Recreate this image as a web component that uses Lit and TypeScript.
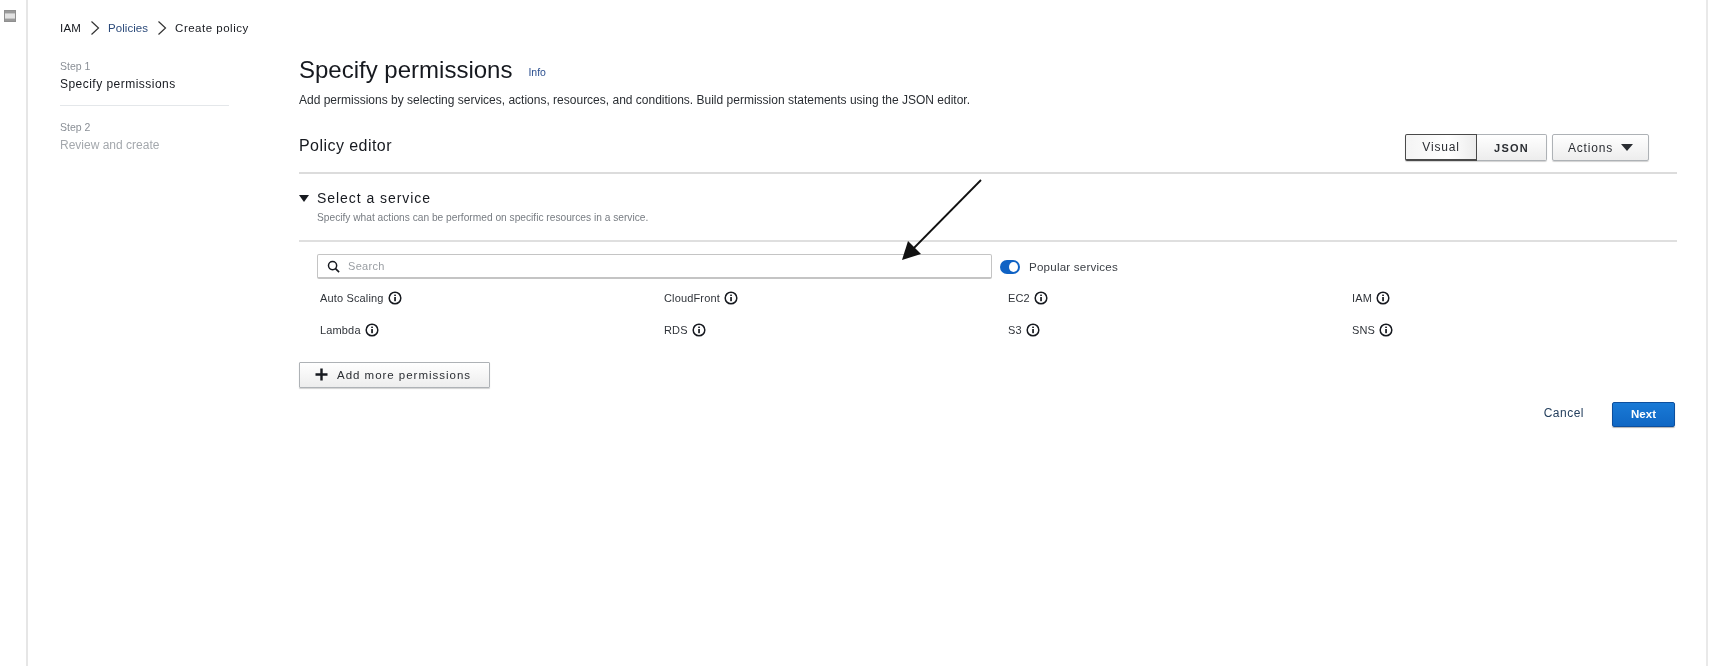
import { LitElement, html, css } from "lit";
import { customElement } from "lit/decorators.js";

const info = html`<svg class="info" viewBox="0 0 14 14" aria-hidden="true"><circle cx="7" cy="7" r="5.8" fill="none" stroke="#16191f" stroke-width="1.5"/><rect x="6.2" y="6" width="1.7" height="4.2" fill="#16191f"/><rect x="6.2" y="3.6" width="1.7" height="1.4" fill="#16191f"/></svg>`;
const chevron = html`<svg class="chev" viewBox="0 0 10 16" aria-hidden="true"><path d="M1.5 1.5 8.5 8 1.5 14.5" fill="none" stroke="#333" stroke-width="1.2"/></svg>`;
const services = ["Auto Scaling", "CloudFront", "EC2", "IAM", "Lambda", "RDS", "S3", "SNS"];

@customElement("app-root")
export class AppRoot extends LitElement {
  static styles = css`
    :host { display: block; width: 1720px; height: 666px; background: #fff; color: #16191f; font-family: "Liberation Sans", Arial, sans-serif; font-size: 12px; position: relative; overflow: hidden; }
    .page { display: flex; height: 666px; filter: blur(0.6px); }
    .rail { width: 26px; flex: none; border-right: 2px solid #e6e6e6; box-sizing: content-box; padding-top: 10px; display: flex; justify-content: center; align-items: flex-start; }
    .rail svg { width: 12px; height: 12px; margin-right: 6px; }
    .content { width: 1680px; flex: none; border-right: 2px solid #e9e9e9; box-sizing: border-box; padding: 18px 0 0 32px; }
    .crumbs { height: 20px; display: flex; align-items: center; font-size: 11.5px; letter-spacing: .2px; }
    .crumbs a { color: #2b4a7a; letter-spacing: .05px; }
    .crumbs span:last-child { letter-spacing: .5px; }
    .chev { width: 10px; height: 16px; margin: 0 8px 0 9px; }
    .body { display: flex; margin-top: 16px; }
    .steps { width: 169px; flex: none; margin-right: 70px; }
    .step-num { color: #8a8f96; font-size: 10.5px; line-height: 14px; margin-top: 5px; }
    .step-cur { font-size: 12px; line-height: 18px; margin-top: 2px; letter-spacing: .47px; color: #16191f; }
    .step-sep { height: 1px; background: #e4e7ea; margin: 12px 0 14px; }
    .step-off { color: #a4a8ad; font-size: 12px; line-height: 16px; margin-top: 3px; }
    .main { width: 1378px; flex: none; }
    .title { display: flex; align-items: center; height: 32px; }
    h1 { font-size: 24px; font-weight: 400; margin: 0; color: #16191f; }
    .info-link { color: #2b4f8f; font-size: 10.5px; margin: 4px 0 0 16px; }
    .sub { font-size: 12px; line-height: 16px; margin: 6px 0 0; color: #2a2e33; }
    .editor-head { display: flex; align-items: center; justify-content: space-between; margin-top: 26px; padding-right: 28px; padding-bottom: 11px; border-bottom: 2px solid #dcdcdc; height: 27px; box-sizing: content-box; }
    h2 { font-size: 16px; font-weight: 400; margin: 0 0 4px; letter-spacing: .45px; color: #16191f; }
    .controls { display: flex; gap: 5px; }
    .seg { display: flex; }
    button { font: inherit; color: #2b2e33; letter-spacing: .8px; height: 27px; box-sizing: border-box; border: 1px solid #aeb2b6; border-radius: 2px; background: linear-gradient(#fff, #ededed); box-shadow: 0 1px 1px rgba(0,0,0,.18); display: flex; align-items: center; justify-content: center; padding: 0; }
    .visual { width: 72px; border: 1px solid #4a4a4a; border-bottom-width: 2px; border-radius: 2px 0 0 2px; background: linear-gradient(90deg, #f4f4f4, #fff 60%, #ececec); }
    .json { width: 70px; border-left: 0; border-radius: 0 2px 2px 0; font-weight: 700; font-size: 11px; letter-spacing: 1.2px; }
    .actions { width: 97px; gap: 8px; }
    .tri { width: 0; height: 0; border-left: 6px solid transparent; border-right: 6px solid transparent; border-top: 7px solid #2b2e33; }
    .svc-head { padding: 14px 0 14px; border-bottom: 2px solid #dfdfdf; }
    .svc-title { display: flex; align-items: center; height: 20px; font-size: 14px; letter-spacing: .95px; }
    .svc-title .tri { border-left-width: 5.5px; border-right-width: 5.5px; border-top-width: 7px; margin-right: 8px; border-top-color: #16191f; }
    .svc-desc { font-size: 10.2px; color: #777c82; line-height: 16px; margin-top: 2px; padding-left: 18px; }
    .search-row { display: flex; align-items: center; padding: 12px 0 0 18px; }
    .search { width: 675px; height: 25px; box-sizing: border-box; border: 1px solid #c4c4c4; border-bottom-width: 2px; border-radius: 2px; display: flex; align-items: center; padding-left: 9px; color: #9a9ea3; font-size: 11px; gap: 8px; letter-spacing: .3px; }
    .search svg { width: 13px; height: 13px; }
    .toggle { width: 20px; height: 14px; border-radius: 7px; background: #0f62c4; margin-left: 8px; display: flex; justify-content: flex-end; align-items: center; padding-right: 2px; box-sizing: border-box; }
    .toggle i { width: 9px; height: 10px; border-radius: 50%; background: #fff; display: block; }
    .toggle-label { margin-left: 9px; font-size: 11.6px; color: #3a3e44; letter-spacing: .2px; }
    .grid { display: grid; grid-template-columns: repeat(4, 344px); grid-auto-rows: 32px; padding: 3px 0 0 21px; }
    .svc { display: flex; align-items: center; gap: 4px; font-size: 11px; color: #30343a; letter-spacing: .15px; }
    .info { width: 14px; height: 14px; flex: none; }
    .add { width: 191px; height: 26px; margin-top: 16px; gap: 9px; justify-content: flex-start; padding: 0 0 1px 15px; border-radius: 1px; font-size: 11.5px; letter-spacing: .98px; }
    .add svg { width: 13px; height: 13px; }
    .footer { display: flex; justify-content: flex-end; align-items: center; margin-top: 14px; padding-right: 2px; }
    .cancel { color: #26415f; font-size: 12px; letter-spacing: .5px; margin: 0 28px 3px 0; }
    .next { width: 63px; height: 25px; padding-bottom: 2px; border: 1px solid #0c4f9e; background: linear-gradient(#1a7ad6, #0f67c4); color: #fff; font-weight: 700; font-size: 11.5px; letter-spacing: 0; border-radius: 2px; box-shadow: 0 1px 1px rgba(0,0,0,.3); }
    .arrow { position: absolute; left: 895px; top: 175px; width: 95px; height: 95px; pointer-events: none; filter: blur(0.3px); }
  `;

  render() {
    return html`
      <div class="page">
        <div class="rail">
          <svg viewBox="0 0 12 12" aria-hidden="true"><rect x=".5" y=".5" width="11" height="11" fill="#e2e2e2" stroke="#8f8f8f"/><rect x="1" y="1" width="10" height="2.4" fill="#9a9a9a"/><rect x="1" y="8.6" width="10" height="2.4" fill="#9a9a9a"/></svg>
        </div>
        <div class="content">
          <nav class="crumbs"><span>IAM</span>${chevron}<a>Policies</a>${chevron}<span>Create policy</span></nav>
          <div class="body">
            <aside class="steps">
              <div class="step-num">Step 1</div>
              <div class="step-cur">Specify permissions</div>
              <div class="step-sep"></div>
              <div class="step-num">Step 2</div>
              <div class="step-off">Review and create</div>
            </aside>
            <main class="main">
              <div class="title"><h1>Specify permissions</h1><a class="info-link">Info</a></div>
              <p class="sub">Add permissions by selecting services, actions, resources, and conditions. Build permission statements using the JSON editor.</p>
              <div class="editor-head">
                <h2>Policy editor</h2>
                <div class="controls">
                  <div class="seg"><button class="visual">Visual</button><button class="json">JSON</button></div>
                  <button class="actions">Actions <span class="tri"></span></button>
                </div>
              </div>
              <div class="svc-head">
                <div class="svc-title"><span class="tri"></span>Select a service</div>
                <div class="svc-desc">Specify what actions can be performed on specific resources in a service.</div>
              </div>
              <div class="search-row">
                <div class="search">
                  <svg viewBox="0 0 14 14" aria-hidden="true"><circle cx="6" cy="6" r="4.4" fill="none" stroke="#16191f" stroke-width="1.6"/><path d="M9.2 9.2 13 13" stroke="#16191f" stroke-width="1.8"/></svg>
                  <span>Search</span>
                </div>
                <div class="toggle"><i></i></div>
                <span class="toggle-label">Popular services</span>
              </div>
              <div class="grid">
                ${services.map((s) => html`<div class="svc"><span>${s}</span>${info}</div>`)}
              </div>
              <button class="add">
                <svg viewBox="0 0 13 13" aria-hidden="true"><path d="M6.5 .5v12M.5 6.5h12" stroke="#16191f" stroke-width="2.4"/></svg>
                Add more permissions
              </button>
              <div class="footer"><span class="cancel">Cancel</span><button class="next">Next</button></div>
            </main>
          </div>
        </div>
      </div>
      <svg class="arrow" viewBox="0 0 95 95" aria-hidden="true">
        <path d="M86 5 14 78" stroke="#111" stroke-width="1.8" fill="none"/>
        <path d="M7 85 13 66 26 79Z" fill="#111"/>
      </svg>
    `;
  }
}
